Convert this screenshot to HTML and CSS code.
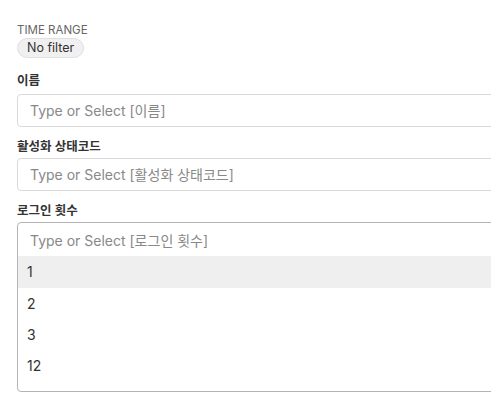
FILE: index.html
```html
<!DOCTYPE html>
<html>
<head>
<meta charset="utf-8">
<link rel="stylesheet" href="styles.css">
</head>
<body>
<div class="panel">
  <div class="time">
    <div class="time-label">TIME RANGE</div>
    <span class="pill">No filter</span>
  </div>
  <div class="field first">
    <div class="label">이름</div>
    <div class="input">Type or Select [이름]</div>
  </div>
  <div class="field">
    <div class="label">활성화 상태코드</div>
    <div class="input">Type or Select [활성화 상태코드]</div>
  </div>
  <div class="field">
    <div class="label">로그인 횟수</div>
    <div class="select-open">
      <div class="input-row">Type or Select [로그인 횟수]</div>
      <div class="menu">
        <div class="option active">1</div>
        <div class="option">2</div>
        <div class="option">3</div>
        <div class="option">12</div>
      </div>
    </div>
  </div>
</div>
</body>
</html>
```
FILE: styles.css
```css
html, body {
  margin: 0;
  padding: 0;
  background: #fff;
  overflow: hidden;
}
body {
  font-family: Inter, "Noto Sans CJK KR", sans-serif;
  color: #333;
}
.panel {
  padding: 23px 0 0 17px;
  width: 530px;
  display: flex;
  flex-direction: column;
}
.time {
  display: flex;
  flex-direction: column;
  align-items: flex-start;
}
.time-label {
  font-size: 11.5px;
  color: #666;
  line-height: 15px;
}
.pill {
  margin-top: 0;
  padding: 0 9px;
  height: 18px;
  line-height: 18px;
  font-size: 12.5px;
  color: #333;
  background: #f0f0f0;
  border: 1px solid #e0e0e0;
  border-radius: 10px;
}
.field {
  display: flex;
  flex-direction: column;
}
.label {
  font-size: 12.5px;
  font-weight: 600;
  color: #333;
  line-height: 16px;
  margin-top: 12px;
  margin-bottom: 3px;
}
.field.first .label {
  margin-top: 15px;
  margin-bottom: 5px;
}
.input {
  height: 31px;
  line-height: 31px;
  border: 1px solid #d9d9d9;
  border-radius: 4px;
  padding-left: 12px;
  font-size: 14px;
  color: #888;
}
.select-open {
  border: 1px solid #b3b3b3;
  border-radius: 4px;
  height: 168px;
}
.input-row {
  height: 33px;
  line-height: 35px;
  padding-left: 12px;
  font-size: 14px;
  color: #888;
}
.option {
  height: 31px;
  line-height: 31px;
  padding-left: 9px;
  font-size: 14px;
  color: #333;
}
.option.active {
  background: #efefef;
  height: 32px;
  line-height: 32px;
}
```
